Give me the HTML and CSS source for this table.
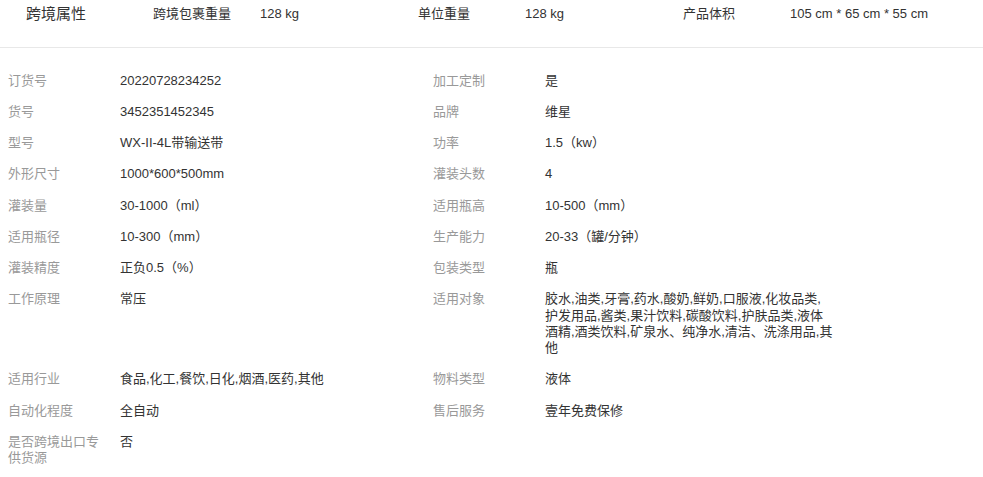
FILE: index.html
```html
<!DOCTYPE html>
<html lang="zh-CN">

<head>
    <meta charset="UTF-8">
    <meta name="viewport" content="width=device-width, initial-scale=1.0">
    <title>商品属性</title>
    <link rel="stylesheet" href="styles.css">
</head>

<body>
    <div class="cross-border">
        <div class="cb-title">跨境属性</div>
        <div class="cb-item">
            <span class="cb-label">跨境包裹重量</span>
            <span class="cb-value">128 kg</span>
        </div>
        <div class="cb-item">
            <span class="cb-label">单位重量</span>
            <span class="cb-value">128 kg</span>
        </div>
        <div class="cb-item">
            <span class="cb-label">产品体积</span>
            <span class="cb-value">105 cm * 65 cm * 55 cm</span>
        </div>
    </div>

    <div class="attr-table">
        <div class="attr-label">订货号</div>
        <div class="attr-value">20220728234252</div>
        <div class="attr-label">加工定制</div>
        <div class="attr-value">是</div>

        <div class="attr-label">货号</div>
        <div class="attr-value">3452351452345</div>
        <div class="attr-label">品牌</div>
        <div class="attr-value">维星</div>

        <div class="attr-label">型号</div>
        <div class="attr-value">WX-II-4L带输送带</div>
        <div class="attr-label">功率</div>
        <div class="attr-value">1.5（kw）</div>

        <div class="attr-label">外形尺寸</div>
        <div class="attr-value">1000*600*500mm</div>
        <div class="attr-label">灌装头数</div>
        <div class="attr-value">4</div>

        <div class="attr-label">灌装量</div>
        <div class="attr-value">30-1000（ml）</div>
        <div class="attr-label">适用瓶高</div>
        <div class="attr-value">10-500（mm）</div>

        <div class="attr-label">适用瓶径</div>
        <div class="attr-value">10-300（mm）</div>
        <div class="attr-label">生产能力</div>
        <div class="attr-value">20-33（罐/分钟）</div>

        <div class="attr-label">灌装精度</div>
        <div class="attr-value">正负0.5（%）</div>
        <div class="attr-label">包装类型</div>
        <div class="attr-value">瓶</div>

        <div class="attr-label">工作原理</div>
        <div class="attr-value">常压</div>
        <div class="attr-label">适用对象</div>
        <div class="attr-value">胶水,油类,牙膏,药水,酸奶,鲜奶,口服液,化妆品类,护发用品,酱类,果汁饮料,碳酸饮料,护肤品类,液体酒精,酒类饮料,矿泉水、纯净水,清洁、洗涤用品,其他</div>

        <div class="attr-label">适用行业</div>
        <div class="attr-value">食品,化工,餐饮,日化,烟酒,医药,其他</div>
        <div class="attr-label">物料类型</div>
        <div class="attr-value">液体</div>

        <div class="attr-label">自动化程度</div>
        <div class="attr-value">全自动</div>
        <div class="attr-label">售后服务</div>
        <div class="attr-value">壹年免费保修</div>

        <div class="attr-label">是否跨境出口专供货源</div>
        <div class="attr-value">否</div>
    </div>
</body>

</html>
```

FILE: styles.css
```css
body {
    font-family: "Liberation Sans", Arial, "Noto Sans CJK SC", sans-serif;
    font-size: 13px;
    color: #333;
    margin: 0;
    padding: 0;
    background-color: #fff;
}

/* cross-border summary bar */
.cross-border {
    display: flex;
    align-items: flex-start;
    height: 47px;
    padding-left: 26px;
    line-height: 28px;
    border-bottom: 1px solid #e8e8e8;
}

.cb-title {
    width: 127px;
    font-size: 15px;
    color: #333;
}

.cb-item {
    display: flex;
    width: 265px;
}

.cb-label {
    width: 107px;
    color: #333;
}

.cb-value {
    color: #333;
}

/* attribute table */
.attr-table {
    display: grid;
    grid-template-columns: 112px 313px 112px 313px;
    width: 850px;
    margin-top: 17px;
    padding-left: 8px;
    line-height: 16.25px;
}

.attr-label,
.attr-value {
    padding: 7.5px 0;
}

.attr-label {
    padding-right: 12px;
    color: #999;
}

.attr-value {
    padding-right: 25px;
    color: #333;
}
```
